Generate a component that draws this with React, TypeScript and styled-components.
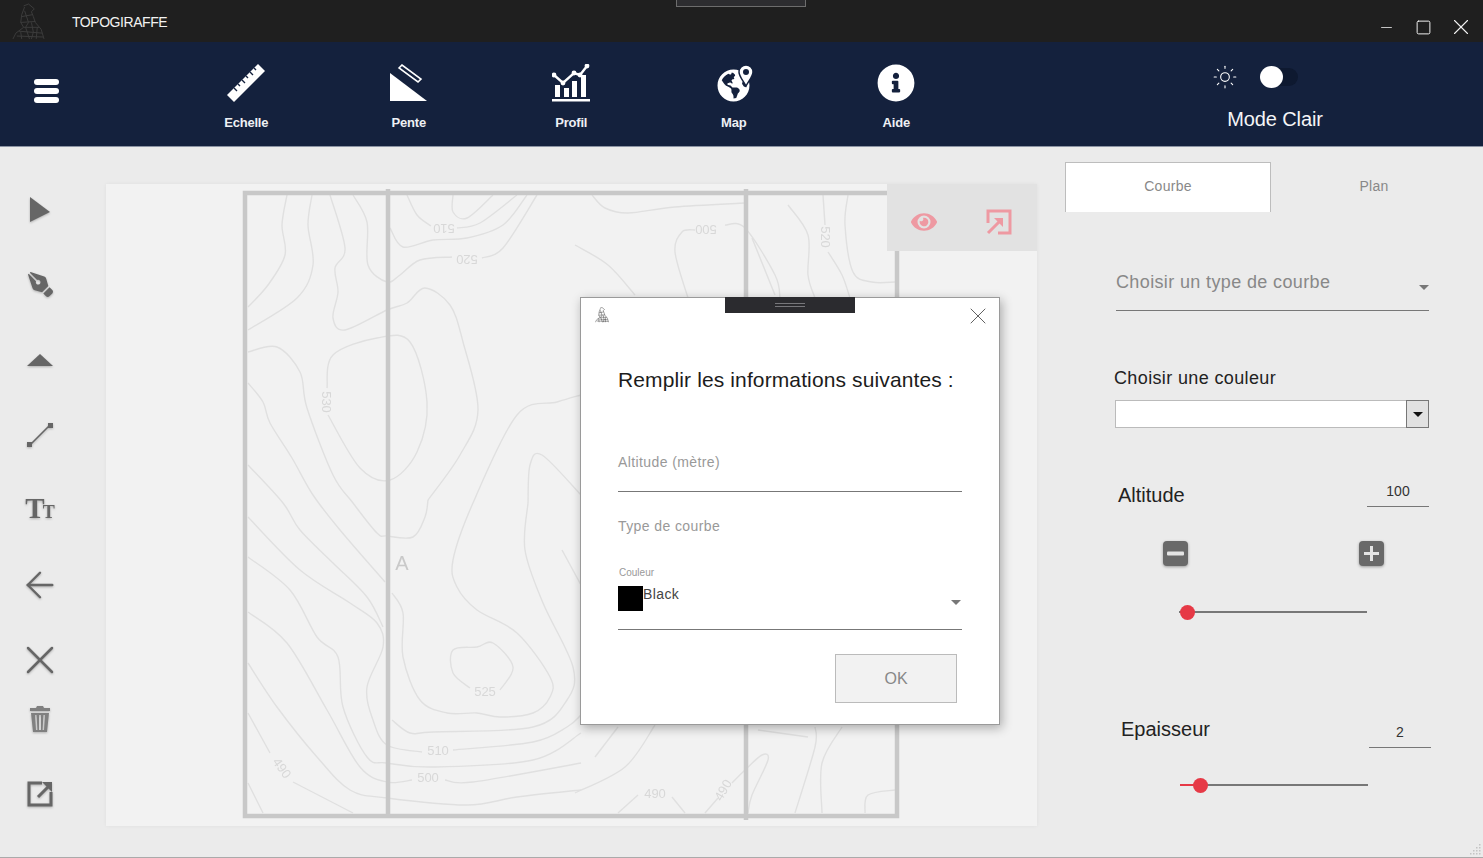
import { ArrowLeft, Minus, Square, Sun, X } from 'lucide-react';
import { FaEye, FaGlobeAmericas, FaInfoCircle, FaPenNib } from 'react-icons/fa';
import styled, { createGlobalStyle } from 'styled-components';

const GlobalStyle = createGlobalStyle`
    html, body {
        margin: 0;
        padding: 0;
        background: #ebebeb;
        font-family: "Liberation Sans", Arial, sans-serif;
    }
`;

const Page = styled.div`
    position: relative;
    width: 1483px;
    height: 858px;
    overflow: hidden;
    display: flex;
    flex-direction: column;
    background: #ebebeb;
    border-bottom: 1px solid #aaa;
    box-sizing: border-box;
`;

const TitleBar = styled.header`
    position: relative;
    flex: none;
    height: 42px;
    display: flex;
    align-items: center;
    padding: 0 4px 0 12px;
    background: #1f1f1f;
    color: #f2f2f2;
`;

const AppName = styled.span`
    margin-left: 27px;
    padding-top: 1px;
    font-size: 14px;
    letter-spacing: -0.45px;
`;

const TopHandle = styled.div`
    position: absolute;
    top: -1px;
    left: 676px;
    width: 128px;
    height: 6px;
    background: #2d2d30;
    border: 1px solid #6d6d6d;
`;

const WindowControls = styled.div`
    display: flex;
    align-items: center;
    margin-left: auto;
    padding-top: 12px;
`;

const WindowControl = styled.span`
    width: 37px;
    height: 26px;
    display: flex;
    align-items: center;
    justify-content: center;
`;

const NavBar = styled.nav`
    flex: none;
    height: 105px;
    display: flex;
    background: #14213d;
    color: #fff;
    border-bottom: 1px solid #8b93a3;
    box-sizing: border-box;
`;

const Burger = styled.div`
    width: 25px;
    margin: 37px 0 0 34px;
    display: flex;
    flex-direction: column;
    gap: 3px;
`;

const BurgerBar = styled.span`
    height: 6px;
    border-radius: 3px;
    background: #fff;
`;

const NavItems = styled.div`
    display: flex;
    margin-left: 106px;
`;

const NavItem = styled.div`
    width: 162.5px;
    display: flex;
    flex-direction: column;
    align-items: center;
    padding-top: 22px;
`;

const NavIcon = styled.div`
    position: relative;
    width: 38px;
    height: 38px;
    display: flex;
    align-items: center;
    justify-content: center;
`;

const NavLabel = styled.span`
    margin-top: 13px;
    font-size: 13px;
    line-height: 16px;
    font-weight: 700;
    letter-spacing: -0.2px;
    color: #eef0f4;
`;

const PinBadge = styled.svg`
    position: absolute;
    top: 0;
    right: -2px;
`;

const ModeBlock = styled.div`
    width: 200px;
    margin-left: auto;
    margin-right: 108px;
    display: flex;
    flex-direction: column;
    align-items: center;
    padding-top: 22px;
`;

const ModeRow = styled.div`
    display: flex;
    align-items: center;
    margin-right: 41px;
    gap: 22px;
`;

const ModeSwitch = styled.div`
    position: relative;
    width: 38px;
    height: 18px;
    border-radius: 9px;
    background: #0e1930;
`;

const ModeThumb = styled.span`
    position: absolute;
    top: -2px;
    left: 0;
    width: 23px;
    height: 22px;
    border-radius: 50%;
    background: #fff;
`;

const ModeLabel = styled.span`
    margin-top: 17px;
    font-size: 20px;
    line-height: 24px;
    letter-spacing: -0.1px;
    color: #f4f5f7;
`;

const Main = styled.main`
    flex: 1;
    display: flex;
    min-height: 0;
`;

const Rail = styled.aside`
    width: 106px;
    flex: none;
    padding-top: 25px;
    box-sizing: border-box;
    color: #666;
`;

const RailSlot = styled.div<{ $pull?: number }>`
    width: 80px;
    height: 75px;
    margin-top: ${(p) => -(p.$pull ?? 0)}px;
    display: flex;
    align-items: center;
    justify-content: center;
    filter: blur(0.4px) drop-shadow(0 1px 1px rgba(0, 0, 0, 0.25));
`;

const TextSizeIcon = styled.span`
    display: flex;
    align-items: baseline;
    font-family: "Liberation Serif", serif;
    font-weight: 700;
    font-size: 29px;
    line-height: 28px;
    color: #666;
`;

const SmallT = styled.span`
    font-size: 18px;
    margin-left: -2px;
`;

const CanvasColumn = styled.section`
    width: 931px;
    flex: none;
    padding-top: 37px;
`;

const Canvas = styled.div`
    position: relative;
    width: 931px;
    height: 642px;
    background: #f2f2f2;
    box-shadow: 0 0 4px rgba(0, 0, 0, 0.05);
`;

const MapDrawing = styled.svg`
    display: block;
    filter: blur(0.6px);
`;

const CanvasTools = styled.div`
    position: absolute;
    top: 0;
    right: 0;
    width: 150px;
    height: 67px;
    display: flex;
    align-items: center;
    justify-content: space-between;
    padding: 9px 25px 0 24px;
    box-sizing: border-box;
    background: #e2e2e2;
    color: #ee99a2;
`;

const Panel = styled.aside`
    flex: 1;
    padding: 15px 0 0 28px;
`;

const Tabs = styled.div`
    display: flex;
    height: 50px;
`;

const Tab = styled.div<{ $active?: boolean }>`
    width: 206px;
    display: flex;
    align-items: center;
    justify-content: center;
    padding-bottom: 3px;
    box-sizing: border-box;
    font-size: 14px;
    letter-spacing: 0.3px;
    color: #888;
    background: ${(p) => (p.$active ? '#fff' : 'transparent')};
    border: 1px solid ${(p) => (p.$active ? '#bdbdbd' : 'transparent')};
    border-bottom: 0;
`;

const TypeSelect = styled.div`
    width: 313px;
    height: 49px;
    margin: 50px 0 0 51px;
    display: flex;
    align-items: flex-start;
    justify-content: space-between;
    box-sizing: border-box;
    border-bottom: 1px solid #777;
    padding-top: 9px;
    font-size: 18px;
    line-height: 22px;
    letter-spacing: 0.37px;
    color: #888;
`;

const Caret = styled.span<{ $color?: string; $flush?: boolean }>`
    width: 0;
    height: 0;
    margin-top: ${(p) => (p.$flush ? 0 : 14)}px;
    border-left: 5px solid transparent;
    border-right: 5px solid transparent;
    border-top: 5px solid ${(p) => p.$color ?? '#777'};
`;

const ColorLabel = styled.div`
    margin: 57px 0 0 49px;
    font-size: 18px;
    line-height: 20px;
    letter-spacing: 0.37px;
    color: #222;
`;

const ColorSelect = styled.div`
    width: 314px;
    height: 28px;
    margin: 12px 0 0 50px;
    display: flex;
    justify-content: flex-end;
    box-sizing: border-box;
    background: #fff;
    border: 1px solid #bbb;
`;

const ColorSelectButton = styled.span`
    width: 23px;
    display: flex;
    align-items: center;
    justify-content: center;
    background: #e1e1e1;
    border: 1px solid #777;
    box-sizing: border-box;
    margin: -1px -1px -1px 0;
`;

const ValueRow = styled.div<{ $top: number; $left: number; $width: number }>`
    width: ${(p) => p.$width}px;
    height: 29px;
    margin: ${(p) => p.$top}px 0 0 ${(p) => p.$left}px;
    display: flex;
    align-items: flex-end;
    justify-content: space-between;
`;

const RowLabel = styled.span<{ $lift?: number }>`
    margin-bottom: ${(p) => p.$lift ?? 0}px;
    font-size: 20px;
    line-height: 24px;
    color: #222;
`;

const ValueBox = styled.span`
    width: 62px;
    height: 29px;
    box-sizing: border-box;
    padding-top: 5px;
    text-align: center;
    font-size: 14px;
    line-height: 16px;
    color: #333;
    border-bottom: 1px solid #777;
`;

const StepRow = styled.div`
    width: 221px;
    margin: 34px 0 0 98px;
    display: flex;
    justify-content: space-between;
`;

const StepButton = styled.button`
    width: 25px;
    height: 25px;
    padding: 0;
    display: flex;
    align-items: center;
    justify-content: center;
    border: 0;
    border-radius: 4px;
    background: #696969;
    box-shadow: 0 1px 3px rgba(0, 0, 0, 0.35);
`;

const Slider = styled.div<{ $top: number; $left: number }>`
    position: relative;
    width: 188px;
    height: 14px;
    margin: ${(p) => p.$top}px 0 0 ${(p) => p.$left}px;
`;

const SliderTrack = styled.span`
    position: absolute;
    top: 6px;
    left: 0;
    right: 0;
    height: 2px;
    background: #777;
`;

const SliderFill = styled.span`
    position: absolute;
    top: 6px;
    left: 0;
    height: 2px;
    background: #e63946;
`;

const SliderThumb = styled.span`
    position: absolute;
    top: 0;
    width: 15px;
    height: 15px;
    margin-left: -7.5px;
    border-radius: 50%;
    background: #e63946;
`;

const ResizeGrip = styled.svg`
    position: absolute;
    right: 1px;
    bottom: 2px;
`;

const Modal = styled.div`
    position: absolute;
    top: 297px;
    left: 580px;
    width: 420px;
    height: 428px;
    box-sizing: border-box;
    padding: 0 37px;
    background: #fff;
    border: 1px solid #9a9a9a;
    box-shadow: 2px 3px 10px rgba(0, 0, 0, 0.3);
`;

const ModalHandle = styled.div`
    position: absolute;
    top: -1px;
    left: 144px;
    width: 130px;
    height: 16px;
    display: flex;
    flex-direction: column;
    align-items: center;
    justify-content: center;
    gap: 2px;
    background: #2b2b2f;
`;

const HandleLine = styled.span`
    width: 30px;
    height: 1px;
    background: #77777b;
`;

const ModalTop = styled.div`
    height: 41px;
    margin: 0 -23px;
    display: flex;
    align-items: flex-start;
    justify-content: space-between;
    padding-top: 9px;
    box-sizing: border-box;
`;

const ModalClose = styled.span`
    display: flex;
    margin: -5px -7px 0 0;
    color: #555;
`;

const ModalTitle = styled.h2`
    margin: 29px 0 0;
    font-size: 21px;
    line-height: 24px;
    font-weight: 400;
    letter-spacing: 0.12px;
    color: #1c1c1c;
    white-space: nowrap;
`;

const AltitudeField = styled.div`
    height: 52px;
    margin-top: 48px;
    padding-top: 12px;
    box-sizing: border-box;
    font-size: 14px;
    line-height: 20px;
    letter-spacing: 0.4px;
    color: #999;
    border-bottom: 1px solid #777;
`;

const TypeField = styled.div`
    margin-top: 24px;
    font-size: 14px;
    line-height: 20px;
    letter-spacing: 0.4px;
    color: #999;
`;

const SmallLabel = styled.div`
    margin-top: 31px;
    font-size: 10px;
    line-height: 12px;
    padding-left: 1px;
    color: #999;
`;

const ColorField = styled.div`
    margin-top: 7px;
    display: flex;
    align-items: flex-start;
    padding-bottom: 18px;
    font-size: 14px;
    line-height: 16px;
    letter-spacing: 0.4px;
    color: #444;
    border-bottom: 1px solid #777;
`;

const Swatch = styled.span`
    width: 25px;
    height: 25px;
    background: #000;
`;

const ModalCaret = styled(Caret)`
    margin-left: auto;
    margin-right: 1px;
`;

const ModalActions = styled.div`
    margin-top: 24px;
    display: flex;
    justify-content: flex-end;
    padding-right: 5px;
`;

const OkButton = styled.button`
    width: 122px;
    height: 49px;
    font-family: inherit;
    font-size: 16px;
    color: #888;
    background: #f2f2f2;
    border: 1px solid #bbb;
`;

type Point = [number, number];

// Catmull-Rom through the traced points, so the contours stay readable as data
const smooth = (pts: Point[]) => {
    let d = `M${pts[0][0]} ${pts[0][1]}`;
    for (let i = 0; i < pts.length - 1; i++) {
        const p0 = pts[i - 1] ?? pts[i];
        const p1 = pts[i];
        const p2 = pts[i + 1];
        const p3 = pts[i + 2] ?? p2;
        const c1x = p1[0] + (p2[0] - p0[0]) / 6;
        const c1y = p1[1] + (p2[1] - p0[1]) / 6;
        const c2x = p2[0] - (p3[0] - p1[0]) / 6;
        const c2y = p2[1] - (p3[1] - p1[1]) / 6;
        d += ` C${c1x} ${c1y} ${c2x} ${c2y} ${p2[0]} ${p2[1]}`;
    }
    return d;
};

const contours: Point[][] = [
    [[287, 195], [282, 225], [285, 255], [268, 285], [248, 307]],
    [[312, 195], [308, 225], [313, 265], [297, 298], [248, 330]],
    [[330, 195], [345, 248], [335, 268], [338, 292], [333, 318], [345, 330], [387, 310], [407, 303], [425, 288], [450, 305], [463, 342], [478, 410], [460, 455], [428, 500]],
    [[353, 195], [367, 222], [368, 265], [387, 282], [400, 275], [420, 260], [452, 257]],
    [[482, 258], [503, 248], [537, 195]],
    [[407, 195], [417, 215], [431, 226]],
    [[457, 228], [480, 223], [517, 195]],
    [[453, 195], [453, 212], [467, 218], [493, 195]],
    [[390, 228], [403, 247], [433, 240], [467, 238], [503, 225], [527, 195]],
    [[327, 388], [333, 355], [377, 338], [410, 342], [427, 402], [417, 452], [390, 480], [360, 468], [328, 415]],
    [[248, 352], [277, 347], [300, 372], [307, 408], [333, 475], [353, 503], [377, 533], [387, 536], [413, 537], [425, 517], [428, 500]],
    [[248, 383], [263, 402], [270, 423], [292, 458], [313, 495], [340, 530], [385, 582]],
    [[248, 465], [283, 503], [300, 530], [333, 563], [367, 597], [383, 627]],
    [[248, 517], [300, 570], [350, 603], [377, 623], [383, 647], [367, 687], [373, 720], [387, 745], [422, 752]],
    [[453, 750], [533, 742], [567, 727], [581, 715]],
    [[248, 557], [290, 590], [317, 637], [338, 657], [343, 707], [367, 757], [387, 763], [433, 767], [533, 760], [581, 733]],
    [[248, 612], [287, 643], [327, 710], [360, 767], [387, 782], [412, 780]],
    [[445, 780], [473, 782], [581, 763]],
    [[248, 663], [277, 707], [317, 757], [350, 790], [387, 798], [467, 805], [517, 797], [581, 790]],
    [[248, 713], [270, 753]],
    [[293, 782], [353, 813]],
    [[248, 783], [263, 813]],
    [[392, 593], [403, 613], [403, 657], [420, 700], [447, 713], [477, 713], [500, 717], [533, 713], [550, 697], [550, 677], [517, 633], [477, 610], [457, 587], [453, 560], [473, 503], [517, 415], [557, 402], [581, 395]],
    [[528, 503], [525, 550], [543, 603], [573, 667], [567, 700], [533, 727], [433, 732], [410, 733], [392, 720]],
    [[528, 503], [530, 465], [542, 455], [581, 495]],
    [[470, 688], [453, 673], [453, 650], [477, 647], [493, 643], [513, 667], [500, 690]],
    [[562, 550], [581, 585]],
    [[592, 195], [605, 208], [628, 213], [675, 207], [745, 203]],
    [[575, 245], [608, 265], [635, 295]],
    [[688, 298], [675, 252], [682, 232], [695, 230]],
    [[725, 225], [745, 228], [775, 275], [780, 298]],
    [[823, 195], [825, 225]],
    [[828, 252], [842, 275], [850, 298]],
    [[848, 195], [845, 225], [853, 272], [872, 282], [895, 282]],
    [[752, 238], [775, 295]],
    [[788, 205], [808, 235], [808, 275], [815, 298]],
    [[575, 793], [625, 767], [655, 725]],
    [[595, 757], [618, 727]],
    [[618, 813], [638, 795]],
    [[672, 797], [685, 813]],
    [[705, 813], [718, 798]],
    [[732, 783], [745, 770], [762, 755], [768, 760], [752, 795], [748, 813]],
    [[815, 727], [815, 747], [795, 813]],
    [[822, 813], [822, 763], [842, 727]],
    [[865, 813], [868, 795], [895, 790]],
    [[758, 730], [808, 737]],
];

const contourLabels: { text: string; x: number; y: number; rotate: number }[] = [
    { text: '510', x: 444, y: 228, rotate: 180 },
    { text: '520', x: 467, y: 259, rotate: 180 },
    { text: '530', x: 326, y: 402, rotate: 90 },
    { text: '525', x: 485, y: 691, rotate: 0 },
    { text: '510', x: 438, y: 750, rotate: 0 },
    { text: '500', x: 428, y: 777, rotate: 0 },
    { text: '490', x: 282, y: 768, rotate: 55 },
    { text: '490', x: 655, y: 793, rotate: 0 },
    { text: '490', x: 723, y: 790, rotate: -60 },
    { text: '500', x: 706, y: 229, rotate: 180 },
    { text: '520', x: 825, y: 237, rotate: 90 },
];

const MapSheet = () => (
    <MapDrawing width={931} height={642} viewBox="106 184 931 642">
        <g fill="none" stroke="#e0e0e0" strokeWidth={1.4}>
            {contours.map((pts, i) => (
                <path key={i} d={smooth(pts)} />
            ))}
        </g>
        <g fill="#d8d8d8" fontSize={13} textAnchor="middle" dominantBaseline="central">
            {contourLabels.map((l, i) => (
                <text key={i} transform={`translate(${l.x} ${l.y}) rotate(${l.rotate})`}>
                    {l.text}
                </text>
            ))}
        </g>
        <text x={402} y={570} fontSize={20} fill="#c9c9c9" textAnchor="middle">
            A
        </text>
        <g fill="none" stroke="#c8c8c8" strokeWidth={4.5}>
            <rect x={245} y={193} width={652} height={623} />
            <path d="M388 189V818M746 189V820" />
        </g>
    </MapDrawing>
);

const Giraffe = ({ size, color }: { size: number; color: string }) => (
    <svg width={size} height={size * 1.12} viewBox="0 0 34 38" fill="none" stroke={color} strokeWidth={1}>
        <path d="M12 3 L17 1 L23 6 L20 9 L22 14 L24 20 L30 27 L33 37" />
        <path d="M13 4 L10 12 L9 20 L12 25 L4 31 L1 37" />
        <path d="M10 14 L21 12 M9 20 L24 19 M12 25 L28 25 M7 29 L31 31 M5 34 L32 35" />
        <path d="M13 8 L17 20 L14 25 L18 37 M20 20 L22 30 L20 37 M26 25 L25 37 M9 30 L10 37" />
    </svg>
);

const RulerIcon = () => (
    <svg width={38} height={38} viewBox="0 0 38 38">
        <path d="M0 31 L31 0 L38 7 L7 38 Z" fill="#fff" />
        <path
            d="M7 24 L10 27 M11 20 L13 22 M15 16 L18 19 M19 12 L21 14 M23 8 L26 11 M27 4 L29 6"
            stroke="#14213d"
            strokeWidth={1.4}
        />
    </svg>
);

const SlopeIcon = () => (
    <svg width={38} height={38} viewBox="0 0 38 38">
        <path d="M0 9 L37 37 L0 37 Z" fill="#fff" />
        <path d="M9 4 L12 1 L31 15 L28 18 Z" fill="none" stroke="#fff" strokeWidth={1.6} />
    </svg>
);

const ProfileIcon = () => (
    <svg width={38} height={38} viewBox="0 0 38 38">
        <path d="M0 35 H38 V37.5 H0 Z" fill="#fff" />
        <path d="M3 21 H8 V33 H3 Z M12 24 H17 V33 H12 Z M20 17 H25 V33 H20 Z M29 11 H34 V33 H29 Z" fill="#fff" />
        <path d="M2 11 L11 19 L22 9 L28 11 L35 2" fill="none" stroke="#fff" strokeWidth={2.4} />
        <g fill="#fff">
            <circle cx={2} cy={11} r={2.4} />
            <circle cx={11} cy={19} r={2.4} />
            <circle cx={22} cy={9} r={2.4} />
            <circle cx={28} cy={11} r={2.4} />
            <circle cx={35} cy={2} r={2.4} />
        </g>
    </svg>
);

const CursorIcon = () => (
    <svg width={24} height={26} viewBox="0 0 24 26">
        <path d="M2 0 L22 15 L2 25 Z" fill="currentColor" />
    </svg>
);

const PeakIcon = () => (
    <svg width={26} height={14} viewBox="0 0 26 14">
        <path d="M13 1 L26 13 H0 Z" fill="currentColor" />
    </svg>
);

const SegmentIcon = () => (
    <svg width={28} height={28} viewBox="0 0 28 28">
        <path d="M4 24 L24 4" stroke="currentColor" strokeWidth={1.6} />
        <rect x={1} y={21} width={5} height={5} fill="currentColor" />
        <rect x={22} y={2} width={5} height={5} fill="currentColor" />
    </svg>
);

const TrashIcon = () => (
    <svg width={22} height={28} viewBox="0 0 22 28" fill="#808080">
        <path d="M8 1 H14 L15 3 H21 V6 H1 V3 H7 Z" />
        <path
            fillRule="evenodd"
            d="M2 8 H20 L18 27 H4 Z M6 10 L7 25 H8.4 L7.6 10 Z M10 10 V25 H12 V10 Z M14.4 10 L13.6 25 H15 L16 10 Z"
        />
    </svg>
);

const ExportIcon = () => (
    <svg width={26} height={26} viewBox="0 0 26 26" fill="none" stroke="currentColor">
        <path d="M15 2 H2 V24 H24 V11" strokeWidth={3} />
        <path d="M11 16 L22 5" strokeWidth={3} />
        <path d="M15 1 H25 V11 Z" fill="currentColor" stroke="none" />
    </svg>
);

const FitIcon = () => (
    <svg width={26} height={26} viewBox="0 0 26 26" fill="none" stroke="currentColor">
        <path d="M2 14 V2 H24 V24 H12" strokeWidth={3} />
        <path d="M2 24 L14 12" strokeWidth={3} />
        <path d="M8 9 H17 V18 Z" fill="currentColor" stroke="none" />
    </svg>
);

const railIcons = [
    { key: 'cursor', icon: <CursorIcon /> },
    { key: 'pen', icon: <FaPenNib size={25} style={{ transform: 'rotate(90deg)' }} /> },
    { key: 'peak', icon: <PeakIcon /> },
    { key: 'segment', icon: <SegmentIcon /> },
    {
        key: 'text',
        icon: (
            <TextSizeIcon>
                T<SmallT>T</SmallT>
            </TextSizeIcon>
        ),
    },
    { key: 'back', icon: <ArrowLeft size={42} strokeWidth={1.4} /> },
    { key: 'cancel', icon: <X size={48} strokeWidth={1.25} /> },
    { key: 'trash', icon: <TrashIcon />, pull: 16 },
    { key: 'export', icon: <ExportIcon /> },
];

const navItems = [
    { label: 'Echelle', icon: <RulerIcon /> },
    { label: 'Pente', icon: <SlopeIcon /> },
    { label: 'Profil', icon: <ProfileIcon /> },
    {
        label: 'Map',
        icon: (
            <>
                <FaGlobeAmericas size={33} style={{ marginTop: 4 }} />
                <PinBadge width={18} height={24} viewBox="0 0 18 24">
                    <path
                        d="M9 22 C5 15 2 12 2 8 A7 7 0 0 1 16 8 C16 12 13 15 9 22 Z"
                        fill="#fff"
                        stroke="#14213d"
                        strokeWidth={1.5}
                    />
                    <circle cx={9} cy={8} r={3} fill="#14213d" />
                </PinBadge>
            </>
        ),
    },
    { label: 'Aide', icon: <FaInfoCircle size={38} /> },
];

const grip = [
    [9, 1],
    [6, 4],
    [9, 4],
    [3, 7],
    [6, 7],
    [9, 7],
    [0, 10],
    [3, 10],
    [6, 10],
    [9, 10],
];

export default function App() {
    return (
        <Page>
            <GlobalStyle />
            <TitleBar>
                <Giraffe size={33} color="#3c3c3c" />
                <AppName>TOPOGIRAFFE</AppName>
                <TopHandle />
                <WindowControls>
                    <WindowControl>
                        <Minus size={17} strokeWidth={1.1} />
                    </WindowControl>
                    <WindowControl>
                        <Square size={17} strokeWidth={1.4} />
                    </WindowControl>
                    <WindowControl>
                        <X size={26} strokeWidth={1} />
                    </WindowControl>
                </WindowControls>
            </TitleBar>

            <NavBar>
                <Burger>
                    <BurgerBar />
                    <BurgerBar />
                    <BurgerBar />
                </Burger>
                <NavItems>
                    {navItems.map((item) => (
                        <NavItem key={item.label}>
                            <NavIcon>{item.icon}</NavIcon>
                            <NavLabel>{item.label}</NavLabel>
                        </NavItem>
                    ))}
                </NavItems>
                <ModeBlock>
                    <ModeRow>
                        <Sun size={26} strokeWidth={1} />
                        <ModeSwitch>
                            <ModeThumb />
                        </ModeSwitch>
                    </ModeRow>
                    <ModeLabel>Mode Clair</ModeLabel>
                </ModeBlock>
            </NavBar>

            <Main>
                <Rail>
                    {railIcons.map((item) => (
                        <RailSlot key={item.key} $pull={item.pull}>
                            {item.icon}
                        </RailSlot>
                    ))}
                </Rail>

                <CanvasColumn>
                    <Canvas>
                        <MapSheet />
                        <CanvasTools>
                            <FaEye size={26} />
                            <FitIcon />
                        </CanvasTools>
                    </Canvas>
                </CanvasColumn>

                <Panel>
                    <Tabs>
                        <Tab $active>Courbe</Tab>
                        <Tab>Plan</Tab>
                    </Tabs>

                    <TypeSelect>
                        Choisir un type de courbe
                        <Caret />
                    </TypeSelect>

                    <ColorLabel>Choisir une couleur</ColorLabel>
                    <ColorSelect>
                        <ColorSelectButton>
                            <Caret $color="#111" $flush />
                        </ColorSelectButton>
                    </ColorSelect>

                    <ValueRow $top={50} $left={53} $width={311}>
                        <RowLabel>Altitude</RowLabel>
                        <ValueBox>100</ValueBox>
                    </ValueRow>
                    <StepRow>
                        <StepButton aria-label="moins">
                            <svg width={17} height={5} viewBox="0 0 17 5">
                                <rect width={17} height={4} y={0.5} rx={1} fill="#e4e4e4" />
                            </svg>
                        </StepButton>
                        <StepButton aria-label="plus">
                            <svg width={17} height={17} viewBox="0 0 17 17">
                                <path d="M7 1 H10 V7 H16 V10 H10 V16 H7 V10 H1 V7 H7 Z" fill="#e4e4e4" />
                            </svg>
                        </StepButton>
                    </StepRow>
                    <Slider $top={39} $left={114}>
                        <SliderTrack />
                        <SliderThumb style={{ left: 8 }} />
                    </Slider>

                    <ValueRow $top={100} $left={56} $width={310}>
                        <RowLabel $lift={7}>Epaisseur</RowLabel>
                        <ValueBox>2</ValueBox>
                    </ValueRow>
                    <Slider $top={30} $left={115}>
                        <SliderTrack />
                        <SliderFill style={{ width: 20 }} />
                        <SliderThumb style={{ left: 20 }} />
                    </Slider>
                </Panel>
            </Main>

            <ResizeGrip width={12} height={12} viewBox="0 0 12 12" fill="#c4c4c4">
                {grip.map(([x, y]) => (
                    <rect key={`${x}-${y}`} x={x} y={y} width={1.5} height={1.5} />
                ))}
            </ResizeGrip>

            <Modal>
                <ModalHandle>
                    <HandleLine />
                    <HandleLine />
                </ModalHandle>
                <ModalTop>
                    <Giraffe size={14} color="#222" />
                    <ModalClose>
                        <X size={28} strokeWidth={0.8} />
                    </ModalClose>
                </ModalTop>
                <ModalTitle>Remplir les informations suivantes :</ModalTitle>
                <AltitudeField>Altitude (mètre)</AltitudeField>
                <TypeField>Type de courbe</TypeField>
                <SmallLabel>Couleur</SmallLabel>
                <ColorField>
                    <Swatch />
                    Black
                    <ModalCaret />
                </ColorField>
                <ModalActions>
                    <OkButton>OK</OkButton>
                </ModalActions>
            </Modal>
        </Page>
    );
}
